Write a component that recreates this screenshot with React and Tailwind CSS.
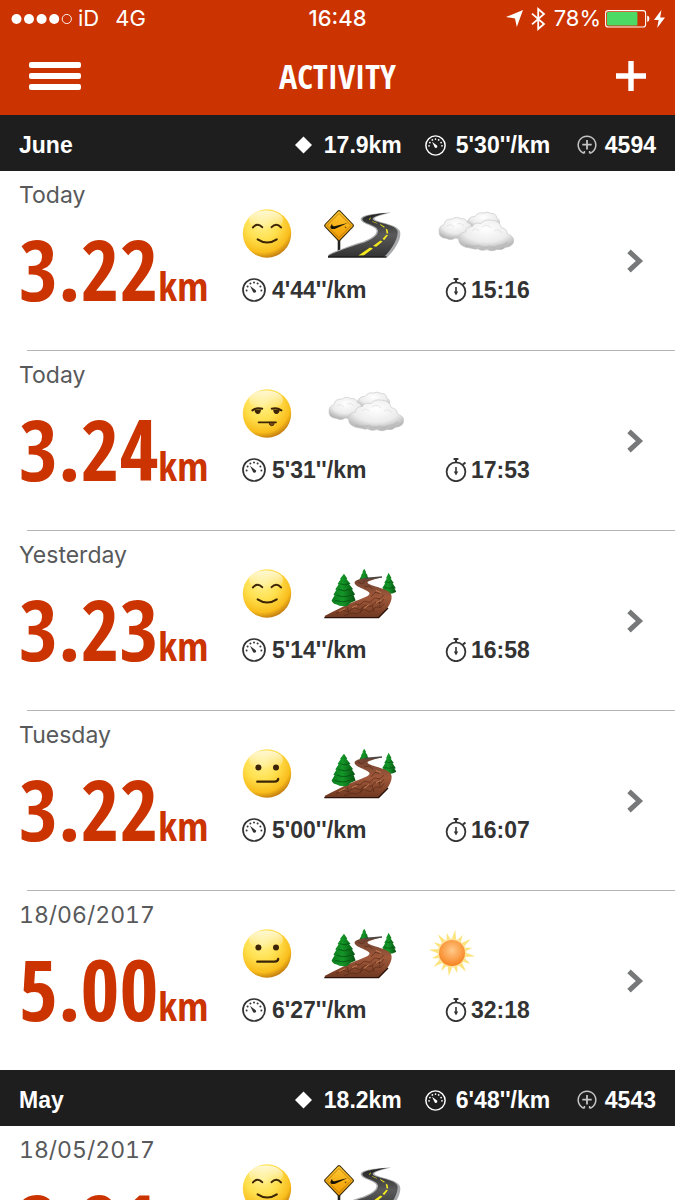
import React from "react";

const months = [
  {
    name: "June",
    distance: "17.9km",
    pace: "5'30''/km",
    fuel: "4594",
    runs: [
      { id: 1, date: "Today", distance: "3.22", pace: "4'44''/km", time: "15:16", icons: ["happy", "road", "cloud"] },
      { id: 2, date: "Today", distance: "3.24", pace: "5'31''/km", time: "17:53", icons: ["tired", "cloud"] },
      { id: 3, date: "Yesterday", distance: "3.23", pace: "5'14''/km", time: "16:58", icons: ["happy", "trail"] },
      { id: 4, date: "Tuesday", distance: "3.22", pace: "5'00''/km", time: "16:07", icons: ["neutral", "trail"] },
      { id: 5, date: "18/06/2017", distance: "5.00", pace: "6'27''/km", time: "32:18", icons: ["neutral", "trail", "sun"] },
    ],
  },
  {
    name: "May",
    distance: "18.2km",
    pace: "6'48''/km",
    fuel: "4543",
    runs: [{ id: 6, date: "18/05/2017", distance: "3.21", icons: ["happy", "road"] }],
  },
];

// Gradients shared by all the run icons
const Gradients = () => (
  <svg className="absolute h-0 w-0" aria-hidden="true">
    <defs>
      <radialGradient id="face" cx="0.4" cy="0.3" r="0.74">
        <stop offset="0" stopColor="#fff08a" />
        <stop offset="0.45" stopColor="#ffe04e" />
        <stop offset="0.8" stopColor="#f9bd1c" />
        <stop offset="1" stopColor="#b8700c" />
      </radialGradient>
      <linearGradient id="shine" x1="0" y1="0" x2="0" y2="1">
        <stop offset="0" stopColor="#fff" stopOpacity="0.75" />
        <stop offset="1" stopColor="#fff" stopOpacity="0" />
      </linearGradient>
      <radialGradient id="puff" cx="0.5" cy="0.3" r="0.7">
        <stop offset="0" stopColor="#ffffff" />
        <stop offset="0.6" stopColor="#ececec" />
        <stop offset="1" stopColor="#b0b0b0" />
      </radialGradient>
      <radialGradient id="sunCore" cx="0.5" cy="0.4" r="0.6">
        <stop offset="0" stopColor="#ffc98a" />
        <stop offset="0.6" stopColor="#fba04a" />
        <stop offset="1" stopColor="#f58220" />
      </radialGradient>
      <linearGradient id="sign" x1="0" y1="0" x2="0" y2="1">
        <stop offset="0" stopColor="#ffc933" />
        <stop offset="1" stopColor="#f09a00" />
      </linearGradient>
      <linearGradient id="asphalt" x1="0" y1="0" x2="0" y2="1">
        <stop offset="0" stopColor="#222" />
        <stop offset="0.5" stopColor="#5a5a5a" />
        <stop offset="1" stopColor="#333" />
      </linearGradient>
      <linearGradient id="dirt" x1="0" y1="0" x2="0" y2="1">
        <stop offset="0" stopColor="#6b4030" />
        <stop offset="0.5" stopColor="#a0583a" />
        <stop offset="1" stopColor="#6e3821" />
      </linearGradient>
      <linearGradient id="tree" x1="0" y1="0" x2="1" y2="0">
        <stop offset="0" stopColor="#0a7a1c" />
        <stop offset="0.45" stopColor="#149628" />
        <stop offset="1" stopColor="#05500f" />
      </linearGradient>
    </defs>
  </svg>
);

const Face = ({ label, children }) => (
  <svg width="50" height="50" viewBox="0 0 50 50" role="img" aria-label={label}>
    <circle cx="25" cy="24.5" r="24.2" fill="url(#face)" />
    <ellipse cx="24" cy="11" rx="17" ry="9.5" fill="url(#shine)" />
    <g stroke="#3c2406" strokeLinecap="round" fill="none">
      {children}
    </g>
  </svg>
);

const Happy = () => (
  <Face label="Happy">
    <path d="M11 18.4q4.5-5.4 9.2-.2M29.6 18.2q4.7-5.2 9.4.2" strokeWidth="2" />
    <path d="M15.6 30.4q9.6 6.4 19.2 0" strokeWidth="2" />
  </Face>
);

const Tired = () => (
  <Face label="Tired">
    <path d="M10.4 21.4q4.4-3.4 9.8-1.6M29.8 19.8q5-1.6 9.6 1.6" strokeWidth="2" />
    <path d="M12.4 20.6h6.6q-.2 4.4-3.2 4.4t-3.4-4.4zM31.2 20.6h6.6q-.4 4.4-3.4 4.4t-3.2-4.4z" fill="#3c2406" stroke="none" />
    <path d="M16.6 33.3h17.4" strokeWidth="1.8" />
    <path d="M27 33.4h5.2q.2 3.4-2.4 3.4t-2.8-3.4z" fill="#7a4a10" strokeWidth="0.8" />
  </Face>
);

const Neutral = () => (
  <Face label="So-so">
    <circle cx="16.4" cy="18.4" r="3" fill="#3c2406" stroke="none" />
    <circle cx="34" cy="18.4" r="3" fill="#3c2406" stroke="none" />
    <path d="M15.2 32.7h17.4q3.4 0 3.6-2.8" strokeWidth="2.2" />
  </Face>
);

const Road = () => (
  <svg width="78" height="50" viewBox="0 0 78 50" role="img" aria-label="Road">
    <path d="M15 30v17" stroke="#222" strokeWidth="2.6" />
    <path d="M4 48L4.6 45.4C17 40 27 36.4 36 33.6 46 30.4 53 26 52.6 21.6 52 16.6 38 15.4 36.8 10.4 36 6 52 4.2 67 3.6 60 5.6 51 7.4 50.4 9.6 50 13 74 14.8 76 22.4 78 30 70 42 63.4 48z" fill="#a9abad" />
    <path d="M4 48L4.6 46.4C18 40.6 28 37.4 37 34.6 47 31.4 54.6 26.6 54 21.4 53.4 16 39.4 14.8 38.4 10.4 38 7 51 4.8 63 4 56 5.8 49 7.4 48.6 10 48.6 13.8 72.6 15 73.6 22.4 74.4 30 66.6 42 60 48z" fill="url(#asphalt)" />
    <path d="M4 48h58.6" stroke="#1c1c1c" strokeWidth="1.4" />
    <path d="M34.4 46.4l5.6-.2 9-6.8-3-1zM49 37l3.2.8 6.4-5.2-2.2-1.2zM58.4 30l1.9 1 3.6-4.8-1.6-.4zM62.6 24.4h1.6l-.6-3.6-1.9-1.2zM59.8 18.6l1.2-.6-4.4-2.8-.8.4zM52.6 14.6l.7-.4-5-2-.5.4zM45 10.8h.9l1-2h-.8z" fill="#f4ea1f" />
    <path d="M13.8 1.6q1.2-1.2 2.4 0L29.4 15.2q1.2 1.4 0 2.8L16.2 31.8q-1.2 1.2-2.4 0L.7 18q-1.2-1.4 0-2.8z" fill="#3a2c0c" />
    <path d="M14.2 2.6q.8-.8 1.6 0L28.4 15.6q.9 1 0 2L15.8 30.6q-.8.8-1.6 0L1.7 17.6q-.9-1 0-2z" fill="url(#sign)" />
    <path d="M15 4.4L27 16.6 15 28.8 3 16.6z" fill="none" stroke="#a66c06" strokeWidth="0.7" />
    <path d="M8.2 14.6q-3.4 4.8-.4 5.4 2 .3 4.6-.8L23.6 14l-12 3q-4 1-3.4-2.4z" fill="#171206" />
    <circle cx="21.6" cy="18.4" r="0.8" fill="#7a5206" />
  </svg>
);

const Cloud = () => (
  <svg width="80" height="50" viewBox="-1 0 80 50" role="img" aria-label="Cloudy">
    <g fill="url(#puff)" stroke="#c6c6c6" strokeWidth="0.6">
      <path d="M33 11q2.6-4 7-3.6 3-4.6 8.6-3.4 3-2 7.4.4 5-.4 5.8 4.6 4 2 2.4 6.6-8 6-26 3.4-8-2-5.2-8z" />
      <path d="M4 22q0-5 5-6.4 1-6.4 8-5.4 4-3.4 9-.6 5-.6 6.4 4 5.2 1.6 5 7-.4 6-8 6.4-3 3.4-9 2-4 3-9 .4-8-.4-7.4-7.4z" />
      <path d="M23.4 30q-.4-6 7-7 .6-5.4 7-5.6 2-4.4 8.4-2.8 4-4.8 11-3.4 8 .4 9.4 7.4 6 1 6.4 6.6 6.4 1.6 6.2 7-1 5.4-8.6 6.2-2.4 3-8.2 2-5 2.8-10 .2-6 1.8-9-.8-3 1-7-.6-12.2-.8-12.6-9.2z" />
    </g>
    <path d="M31 36q6 2.6 12.6.6 5 3 10.6.8 6 2 9-.8 6 .2 9.4-3.8" fill="none" stroke="#a8a8a8" strokeWidth="1.8" opacity="0.35" />
    <path d="M37 22q3-4 7 0M47 18q5-4 9 1M59 22q5-3 8 2M12 17q4-3 7 1M22 15q4-2 7 2" fill="none" stroke="#c4c4c4" strokeWidth="0.9" opacity="0.4" />
  </svg>
);

const Trail = () => (
  <svg width="72" height="50" viewBox="0 0 72 50" role="img" aria-label="Trail">
    <path d="M40.2-.4l2 3.6-.7.2 2.3 3-.8.2 2.4 3.6H35.4l2.2-3.6-.7-.2 2-3-.6-.2z" fill="url(#tree)" />
    <path d="M64.6 3.8l3 5.4-1 .2 3.2 4.6-1.2.3 3.2 5-1.4.4 2 3q-8 4.6-15.2 0l2.2-3.2-1.2-.3 3-5-1-.2 2.6-4.4-.8-.3z" fill="url(#tree)" />
    <path d="M.4 48.4L1 46.8C10 42 19 37.6 27 34 36 30 45.6 27.6 45.6 24.6 45.6 21 31 18.4 30.6 14 30.4 9.4 44 8.4 58 8 53 10 44 11.4 43.4 13.6 45 17.6 66.6 19 67.6 27 68.4 35 60 43.6 54.4 49z" fill="url(#dirt)" />
    <path d="M.4 48.6h54.2L64 39" stroke="#2c120a" strokeWidth="1.4" fill="none" />
    <path d="M41 9.8Q50 8.6 58 8" stroke="#4c4a48" strokeWidth="1.6" />
    <path d="M12 44.6l7-3.4 5 1.6 6-4 6 2 5-4.4 6 1 4-4 6 .6 3-4M20 46.6l8-2.6 5 1 7-4.6 6 2.6 6-5 5 .4 3-4M31 35l5 1 4-4 6 1.4 4-4.4 6 .6 4-3.4M47 28l4-4.6 5 1M34 13l4 2 3-3M40 18l5-1 4 3M36 44l3-6M50 43l-2-7M25 44l-2-6M56 38l-1-8" stroke="#48200f" strokeWidth="0.7" opacity="0.75" fill="none" />
    <path d="M15 42.6l6-3M28 38.6l5-2M40 39.4l5-4M52 34l5-3M52 21.6l5 2" stroke="#c98058" strokeWidth="0.9" />
    <path d="M20 4.8l3.4 5-1 .2 4 4.8-1.2.4 4 5-1.4.4 3.4 5-1.6.4 2 5.6q-5 1.6-8 5.4-8 1-10.8-1.4-4-.4-5.2-4l3-5.4-1.2-.4 3-5-1.2-.4 3.4-5-1-.4 3.2-5-.8-.2z" fill="url(#tree)" />
    <path d="M16.4 14.8q4 2 8 0M14.4 20.4q6 2.8 11.6 0M12.8 26q7 3.2 14.4 0M11 31.4q8 3 15 0" stroke="#04480e" strokeWidth="1" fill="none" opacity="0.7" />
    <path d="M62 12.8q3 1.4 5.6 0M60.6 18.4q4.4 1.8 8.4 0" stroke="#04480e" strokeWidth="0.8" fill="none" opacity="0.7" />
  </svg>
);

const Sun = () => (
  <svg width="48" height="50" viewBox="-24 -24 48 50" role="img" aria-label="Sunny">
    <g fill="#fce37a">
      {[0, 22.5, 45, 67.5, 90, 112.5, 135, 157.5, 180, 202.5, 225, 247.5, 270, 292.5, 315, 337.5].map((angle, i) => (
        <path key={angle} d={i % 2 ? "M-2.4-12L0-21 2.4-12z" : "M-2.6-12L0-23.4 2.6-12z"} transform={`rotate(${angle + 8})`} />
      ))}
    </g>
    <circle r="14.4" fill="#fde39a" />
    <circle r="13" fill="url(#sunCore)" />
  </svg>
);

const runIcons = { happy: Happy, tired: Tired, neutral: Neutral, road: Road, cloud: Cloud, trail: Trail, sun: Sun };

const Gauge = ({ size }) => (
  <svg width={size} height={size} viewBox="0 0 24 24" fill="none" stroke="currentColor" className="shrink-0" aria-hidden="true">
    <circle cx="12" cy="12" r="11" strokeWidth="1.7" />
    <g fill="currentColor" stroke="none">
      <circle cx="4.6" cy="12.4" r="1" />
      <circle cx="5.6" cy="8.6" r="1" />
      <circle cx="8.4" cy="5.6" r="1" />
      <circle cx="12" cy="4.6" r="1" />
      <circle cx="15.6" cy="5.6" r="1" />
      <circle cx="18.4" cy="8.6" r="1" />
      <circle cx="19.4" cy="12.4" r="1" />
      <path d="M8 7.8l6 4.6q.6 2.2-1.4 2.4-1.6 0-1.8-1.4z" />
    </g>
  </svg>
);

const Stopwatch = () => (
  <svg width="24" height="24" viewBox="0 0 24 24" fill="none" stroke="currentColor" className="shrink-0" aria-hidden="true">
    <circle cx="11" cy="13.8" r="9.4" strokeWidth="1.8" />
    <path d="M11 1v3.6M8.6 1h4.8M18 6.6l2.4-2.2" strokeWidth="2" />
    <path d="M11 9v6" strokeWidth="1.6" />
    <path d="M8.8 13.4h4.4L11 17.4z" fill="currentColor" stroke="none" />
  </svg>
);

const Fuel = () => (
  <svg width="20" height="20" viewBox="0 0 20 20" fill="none" stroke="#c4c4c4" className="shrink-0" aria-hidden="true">
    <path d="M7 18.2a8.8 8.8 0 1 1 6 0M7.4 18.6v-2.6M12.6 18.6v-2.6" strokeWidth="1.5" />
    <path d="M10 5v9.4M5.3 9.7h9.4" strokeWidth="1.8" />
  </svg>
);

const StatusBar = () => (
  <div className="flex h-[37px] items-center px-[10px] font-['Inter',sans-serif] text-[22px] text-white">
    <div className="flex flex-1 items-center">
      <svg width="62" height="12" viewBox="0 0 62 12" fill="#fff" role="img" aria-label="Signal">
        <circle cx="6.5" cy="6" r="5" />
        <circle cx="19" cy="6" r="5" />
        <circle cx="31.6" cy="6" r="5" />
        <circle cx="44.2" cy="6" r="5" />
        <circle cx="56.8" cy="6" r="4.6" fill="none" stroke="#fff" strokeWidth="0.9" />
      </svg>
      <span className="ml-1.5">iD</span>
      <span className="ml-4">4G</span>
    </div>
    <span className="font-medium">16:48</span>
    <div className="flex flex-1 items-center justify-end">
      <svg width="17" height="17" viewBox="0 0 17 17" fill="#fff" aria-hidden="true">
        <path d="M17 0L10.8 17 9 8.6 0 7z" />
      </svg>
      <svg width="15" height="24" viewBox="0 0 15 24" fill="none" stroke="#fff" strokeWidth="1.8" className="ml-2" aria-hidden="true">
        <path d="M1 6.6L13 17 7.2 22V2L13 7 1 17.4" />
      </svg>
      <span className="mr-1 ml-2">78%</span>
      <svg width="45" height="18" viewBox="0 0 45 18" role="img" aria-label="Battery charging">
        <rect x="0.6" y="0.6" width="40" height="16.4" rx="2.6" fill="none" stroke="#fff" strokeWidth="1.1" />
        <rect x="2" y="2" width="30.4" height="13.6" rx="1" fill="#4cd964" />
        <path d="M42.2 5.6q2.2.6 2.2 3.2t-2.2 3.2z" fill="#fff" />
      </svg>
      <svg width="11" height="18" viewBox="0 0 11 18" fill="#fff" className="ml-1" aria-hidden="true">
        <path d="M7.4 0L0 10h4.6L3.2 18 11 7.4H6.2z" />
      </svg>
    </div>
  </div>
);

const MonthHeader = ({ month }) => (
  <div className="flex h-14 items-center bg-[#1e1e1e] px-[19px] pt-1 font-['Liberation_Sans',Arial,sans-serif] text-[23px] font-bold text-white">
    <h2 className="flex-1">{month.name}</h2>
    <div className="flex items-center">
      <svg width="17" height="18" viewBox="0 0 17 18" fill="#fff" aria-hidden="true">
        <path d="M8.5 .5L17 9l-8.5 8.5L0 9z" />
      </svg>
      <span className="ml-3">{month.distance}</span>
    </div>
    <div className="ml-[23px] flex items-center">
      <Gauge size={21} />
      <span className="ml-2.5 w-[101px]">{month.pace}</span>
    </div>
    <div className="ml-5 flex items-center">
      <Fuel />
      <span className="ml-2">{month.fuel}</span>
    </div>
  </div>
);

const RunRow = ({ run }) => (
  <li className="group">
    <a href={`#run-${run.id}`} className="flex min-h-[179px] pr-[31px] pl-[19px]">
      <div className="w-[223px] shrink-0 pt-2.5">
        <p className="font-['Inter',sans-serif] text-[23px] leading-7 text-[#58595b] tabular-nums">{run.date}</p>
        <p className="mt-3 font-['Open_Sans_Condensed','Roboto_Condensed',sans-serif] text-[84px] leading-[96px] font-bold text-[#cb3301]">
          {run.distance}
          <span className="text-[40px] leading-none">km</span>
        </p>
      </div>
      <div className="flex-1 pt-[38px]">
        <div className="flex gap-8">
          {run.icons.map((name) => {
            const Icon = runIcons[name];
            return <Icon key={name} />;
          })}
        </div>
        {run.pace && (
          <div className="mt-[19px] flex font-['Liberation_Sans',Arial,sans-serif] text-[23px] leading-6 font-bold text-[#333]">
            <span className="flex w-[203px] items-center gap-1.5">
              <Gauge size={24} />
              {run.pace}
            </span>
            <span className="flex items-center gap-0.5">
              <Stopwatch />
              {run.time}
            </span>
          </div>
        )}
      </div>
      <svg width="18" height="24" viewBox="0 0 18 24" fill="none" stroke="#77787a" strokeWidth="5" className="self-center" aria-hidden="true">
        <path d="M3 2.4L13.4 12 3 21.6" />
      </svg>
    </a>
    <div className="ml-[27px] h-px bg-[#b4b4b4] group-last:hidden" />
  </li>
);

export default function App() {
  return (
    <div className="flex h-screen flex-col bg-white">
      <Gradients />
      <header className="shrink-0 bg-[#cb3301]">
        <StatusBar />
        <div className="flex h-[78px] items-center justify-between px-[29px]">
          <button type="button" aria-label="Menu" className="flex w-[52px] flex-col gap-[5px]">
            <span className="h-1.5 rounded-xs bg-white" />
            <span className="h-1.5 rounded-xs bg-white" />
            <span className="h-1.5 rounded-xs bg-white" />
          </button>
          <h1 className="font-['Open_Sans_Condensed','Roboto_Condensed',sans-serif] text-[34px] leading-none font-bold text-white">
            ACTIVITY
          </h1>
          <div className="flex w-[52px] justify-end">
            <button type="button" aria-label="Add activity">
              <svg width="30" height="30" viewBox="0 0 30 30" stroke="#fff" strokeWidth="5.4" aria-hidden="true">
                <path d="M15 0v30M0 15h30" />
              </svg>
            </button>
          </div>
        </div>
      </header>
      <main className="flex-1 overflow-y-auto [scrollbar-width:none]">
        {months.map((month) => (
          <section key={month.name}>
            <MonthHeader month={month} />
            <ul>
              {month.runs.map((run) => (
                <RunRow key={run.id} run={run} />
              ))}
            </ul>
          </section>
        ))}
      </main>
    </div>
  );
}
